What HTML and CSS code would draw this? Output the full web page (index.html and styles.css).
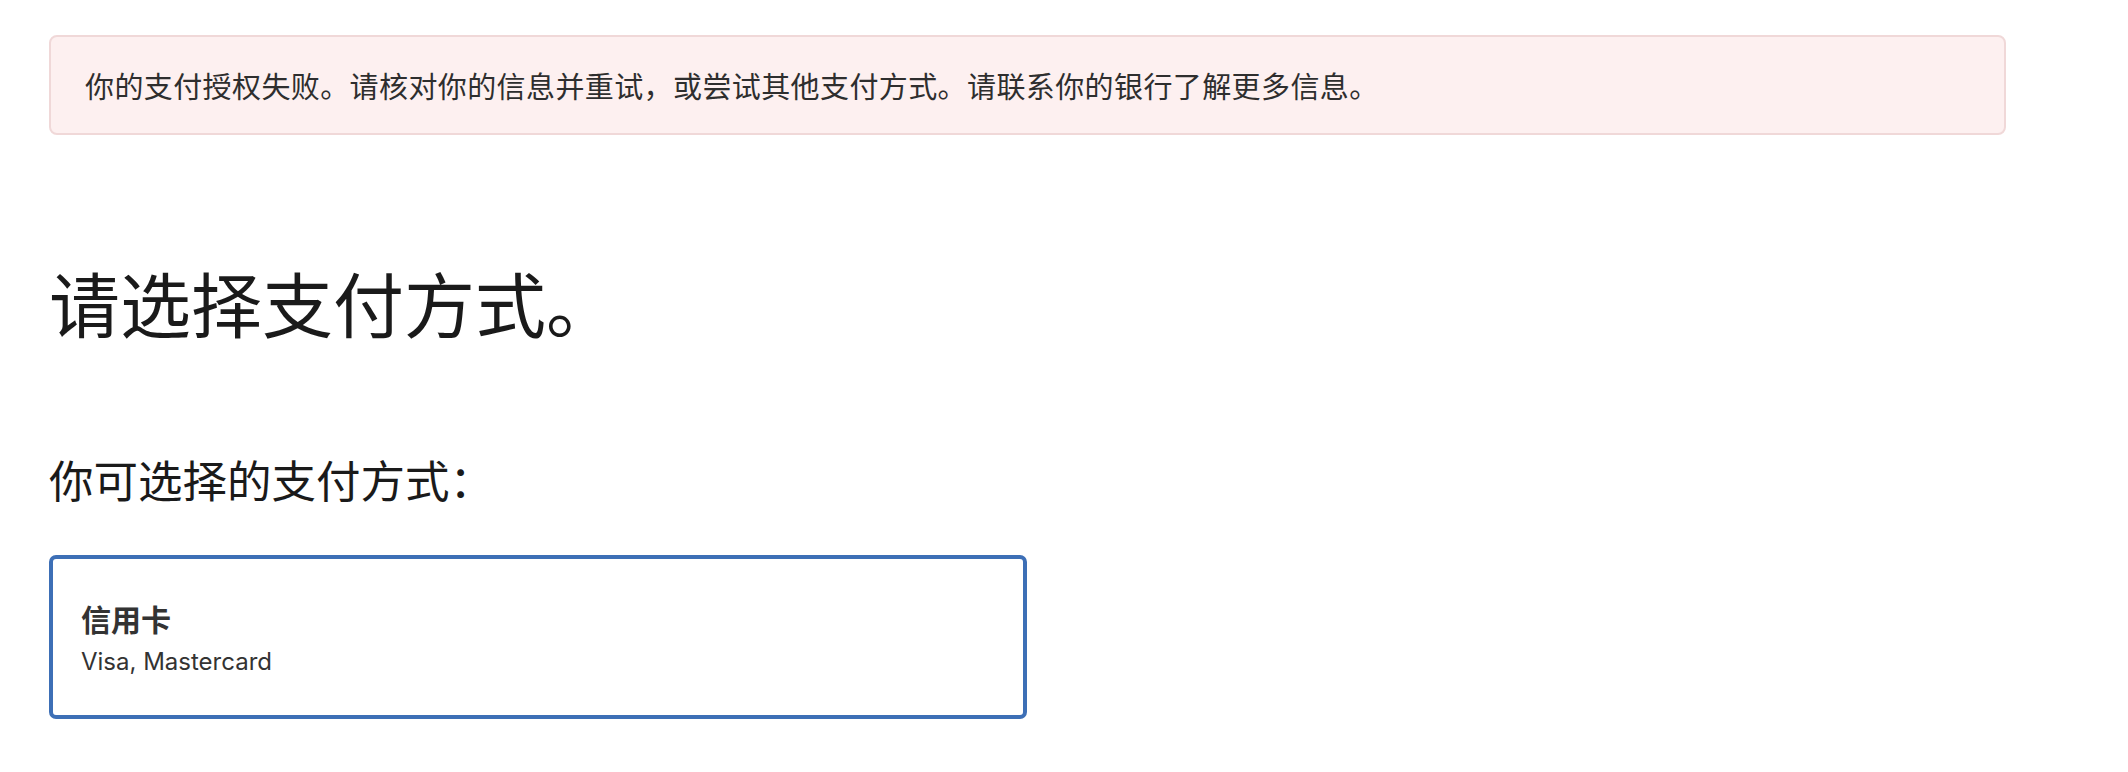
FILE: index.html
```html
<!DOCTYPE html>
<html lang="zh-CN">
<head>
<meta charset="utf-8">
<title>请选择支付方式</title>
<link rel="stylesheet" href="styles.css">
</head>
<body>
<main class="page">
  <div class="alert">你的支付授权失败。请核对你的信息并重试，或尝试其他支付方式。请联系你的银行了解更多信息。</div>
  <h1 class="title">请选择支付方式。</h1>
  <h2 class="subtitle">你可选择的支付方式：</h2>
  <div class="option">
    <div class="option-name">信用卡</div>
    <div class="option-desc">Visa, Mastercard</div>
  </div>
</main>
</body>
</html>
```

FILE: styles.css
```css
html, body {
  margin: 0;
  padding: 0;
  background: #ffffff;
}

body {
  font-family: Inter, "Noto Sans CJK SC", sans-serif;
  color: #1d1d1f;
}

.page {
  display: flex;
  flex-direction: column;
  align-items: flex-start;
  padding: 35px 122px 0 49px;
}

.alert {
  box-sizing: border-box;
  width: 100%;
  height: 100px;
  display: flex;
  align-items: center;
  padding: 0 34px;
  background: #fdf0f0;
  border: 2px solid #f0d8d8;
  border-radius: 8px;
  font-family: "Noto Sans CJK SC", sans-serif;
  font-size: 29px;
  letter-spacing: 0.4px;
  color: #2e2e2e;
}

.title {
  margin: 131px 0 0;
  font-family: "Noto Sans CJK SC", sans-serif;
  font-size: 71px;
  line-height: 71px;
  font-weight: 400;
  color: #1a1a1a;
}

.subtitle {
  margin: 120px 0 0;
  font-family: "Noto Sans CJK SC", sans-serif;
  font-size: 44.5px;
  line-height: 44px;
  font-weight: 400;
  color: #1a1a1a;
}

.option {
  box-sizing: border-box;
  margin-top: 54px;
  width: 978px;
  height: 164px;
  border: 4px solid #3d6fb6;
  border-radius: 7px;
  padding: 41px 28px 0;
  display: flex;
  flex-direction: column;
}

.option-name {
  font-family: "Noto Sans CJK SC", sans-serif;
  font-size: 30px;
  line-height: 36px;
  font-weight: 600;
  color: #333333;
}

.option-desc {
  margin-top: 10px;
  font-size: 24px;
  line-height: 32px;
  color: #333333;
}
```
